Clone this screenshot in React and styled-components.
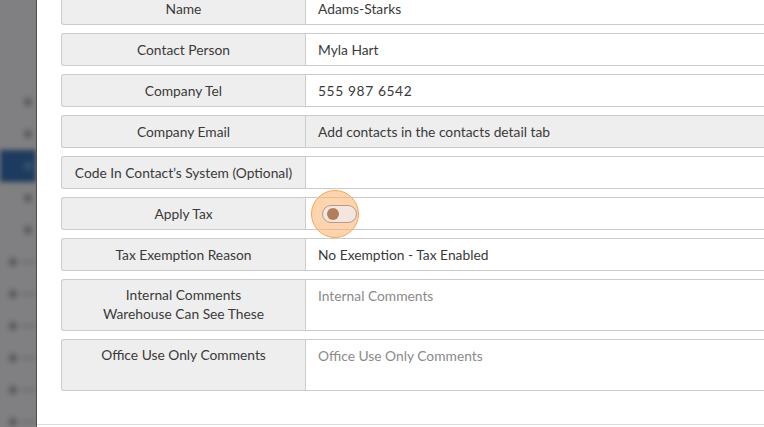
import React from "react";
import styled, { createGlobalStyle } from "styled-components";

const Global = createGlobalStyle`
  html, body {
    margin: 0;
    padding: 0;
    height: 100%;
    overflow: hidden;
    background: #fff;
  }
  body {
    font-family: Lato, "Open Sans", "Liberation Sans", sans-serif;
    font-size: 13.8px;
    color: #3a3a3a;
  }
`;

const Page = styled.div`
  display: flex;
  width: 764px;
  height: 427px;
  overflow: hidden;
`;

const Sidebar = styled.div`
  flex: 0 0 36px;
  background: #808082;
  border-right: 1px solid #4e4e50;
  overflow: hidden;
`;

const SideList = styled.div`
  display: flex;
  flex-direction: column;
  padding-top: 86px;
  filter: blur(2.5px);
`;

const SideItem = styled.div`
  height: 32px;
  display: flex;
  align-items: center;
  gap: 5px;
  padding-left: ${(p) => (p.$sub ? 9 : 24)}px;
  background: ${(p) => (p.$active ? "#1d3b5e" : "transparent")};
`;

const SideDot = styled.span`
  width: 8px;
  height: 8px;
  border-radius: 2px;
  background: ${(p) => (p.$active ? "#35516f" : "#5e5e60")};
  flex: 0 0 auto;
`;

const SideText = styled.span`
  height: 4px;
  width: 20px;
  background: ${(p) => (p.$active ? "#3d5878" : "#727274")};
`;

const Modal = styled.div`
  flex: 1 1 auto;
  background: #fff;
  display: flex;
  flex-direction: column;
  overflow: hidden;
`;

const Body = styled.div`
  display: flex;
  flex-direction: column;
  gap: 8px;
  margin-top: -8px;
  padding-left: 24px;
  height: 432px;
  flex: 0 0 auto;
  border-bottom: 1px solid #dcdcdc;
`;

const Row = styled.div`
  display: flex;
  width: 760px;
  flex: 0 0 ${(p) => (p.$tall ? 52 : 33)}px;
`;

const Label = styled.div`
  box-sizing: border-box;
  flex: 0 0 244px;
  background: #eeeeee;
  border: 1px solid #cccccc;
  border-right: none;
  border-radius: 3px 0 0 3px;
  display: flex;
  flex-direction: column;
  align-items: center;
  justify-content: ${(p) => (p.$top ? "flex-start" : "center")};
  padding-top: ${(p) => (p.$top ? 5 : 0)}px;
  line-height: 19px;
  text-align: center;
`;

const Value = styled.div`
  box-sizing: border-box;
  flex: 1 1 auto;
  background: ${(p) => (p.$disabled ? "#eeeeee" : "#fff")};
  border: 1px solid #cccccc;
  display: flex;
  align-items: ${(p) => (p.$top ? "flex-start" : "center")};
  padding: ${(p) => (p.$top ? "7px 12px" : "0 12px")};
  color: ${(p) => (p.$placeholder ? "#8a8a8a" : "#3a3a3a")};
  letter-spacing: ${(p) => (p.$wide ? "0.6px" : "0")};
`;

const ToggleWrap = styled.div`
  position: relative;
  width: 35px;
  height: 18px;
  margin-left: 4px;
`;

const Halo = styled.span`
  position: absolute;
  left: -11px;
  top: -15px;
  width: 46px;
  height: 46px;
  border-radius: 50%;
  background: rgba(253, 176, 108, 0.55);
  border: 1px solid #f8a458;
`;

const Track = styled.span`
  position: absolute;
  inset: 0;
  border-radius: 9px;
  background: #f3e6df;
  border: 1.5px solid #b8988a;
  box-sizing: border-box;
`;

const Knob = styled.span`
  position: absolute;
  left: 5px;
  top: 3px;
  width: 12px;
  height: 12px;
  border-radius: 50%;
  background: #b27f5c;
`;

const Toggle = () => (
  <ToggleWrap>
    <Halo />
    <Track />
    <Knob />
  </ToggleWrap>
);

const side = [
  {},
  {},
  { active: true },
  {},
  {},
  { sub: true },
  { sub: true },
  { sub: true },
  { sub: true },
  { sub: true },
  { sub: true },
];

const App = () => {
  return (
    <>
      <Global />
      <Page>
        <Sidebar>
          <SideList>
            {side.map((s, i) => (
              <SideItem key={i} $active={s.active} $sub={s.sub}>
                <SideDot $active={s.active} />
                <SideText $active={s.active} />
              </SideItem>
            ))}
          </SideList>
        </Sidebar>
        <Modal>
          <Body>
            <Row>
              <Label>Name</Label>
              <Value>Adams-Starks</Value>
            </Row>
            <Row>
              <Label>Contact Person</Label>
              <Value>Myla Hart</Value>
            </Row>
            <Row>
              <Label>Company Tel</Label>
              <Value $wide>555 987 6542</Value>
            </Row>
            <Row>
              <Label>Company Email</Label>
              <Value $disabled>Add contacts in the contacts detail tab</Value>
            </Row>
            <Row>
              <Label>Code In Contact’s System (Optional)</Label>
              <Value />
            </Row>
            <Row>
              <Label>Apply Tax</Label>
              <Value>
                <Toggle />
              </Value>
            </Row>
            <Row>
              <Label>Tax Exemption Reason</Label>
              <Value>No Exemption - Tax Enabled</Value>
            </Row>
            <Row $tall>
              <Label $top>
                <span>Internal Comments</span>
                <span>Warehouse Can See These</span>
              </Label>
              <Value $top $placeholder>
                Internal Comments
              </Value>
            </Row>
            <Row $tall>
              <Label $top>Office Use Only Comments</Label>
              <Value $top $placeholder>
                Office Use Only Comments
              </Value>
            </Row>
          </Body>
        </Modal>
      </Page>
    </>
  );
};

export default App;
